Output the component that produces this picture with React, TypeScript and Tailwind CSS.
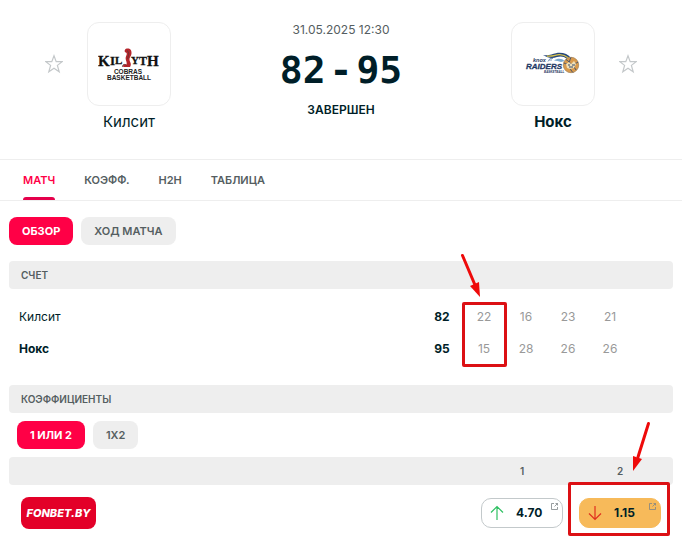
import { ReactNode, useState } from "react";
import clsx from "clsx";

const tabs = ["МАТЧ", "КОЭФФ.", "H2H", "ТАБЛИЦА"];

const rows = [
  { team: "Килсит", total: 82, quarters: [22, 16, 23, 21], winner: false },
  { team: "Нокс", total: 95, quarters: [15, 28, 26, 26], winner: true }
];

function StarButton({ label }: { label: string }) {
  return (
    <button type="button" aria-label={label} className="mt-8 self-start">
      <svg width="18" height="20" viewBox="0 0 18 20" fill="none" stroke="#c4c8ca" strokeWidth="1.2">
        <path d="M9 1.800 11.200 7.600H17.200L12.400 11.400 14.200 17.800 9 14.200 3.800 17.800 5.600 11.400.8 7.600H6.800Z" />
      </svg>
    </button>
  );
}

function KilsythLogo() {
  return (
    <svg width="62" height="40" viewBox="0 0 62 40" role="img" aria-label="Kilsyth Cobras">
      <g fontFamily="Liberation Serif, serif" fontWeight="700" fill="#111" stroke="#111" strokeWidth=".3">
        <text x="0" y="22" fontSize="15">K</text>
        <text x="12" y="21" fontSize="13">I</text>
        <text x="17" y="20" fontSize="11">L</text>
        <text x="33" y="20" fontSize="11">Y</text>
        <text x="41" y="21" fontSize="12">T</text>
        <text x="49" y="22" fontSize="15">H</text>
      </g>
      <path
        d="M27.500 5C31 3.500 34 5.500 33.500 9.500 33.500 12 31 13.500 31.500 16 32 18.500 34 20 32 23L25.500 23C24 21.500 26 19.500 28.500 20.500 29.500 18 27 16 27.800 13 28.500 11 29.500 9.500 28 8.500 26.500 8.500 26 6.500 27.500 5Z"
        fill="#b5252b"
      />
      <path
        d="M29 6.500C32 8.500 30 12 29.800 15M24.500 23C24 20.500 26.500 19.500 28.500 21.500"
        stroke="#5a3434"
        strokeWidth=".8"
        fill="none"
      />
      <g fontFamily="Liberation Sans, sans-serif" fontWeight="700" fill="#222" textAnchor="middle">
        <text x="30" y="30" fontSize="6.500">COBRAS</text>
        <text x="31" y="36" fontSize="6.500">BASKETBALL</text>
      </g>
    </svg>
  );
}

function RaidersLogo() {
  return (
    <svg width="56" height="28" viewBox="0 0 56 28" role="img" aria-label="Knox Raiders">
      <path d="M18 5C24 6 27 4 31 3.200 37 2 43 4 46 8L42 9C39 6 35 6 32 7 27 9 23 8 18 5Z" fill="#27477c" />
      <path d="M22 6C27 7 30 5 34 4.600 38 4.300 41 6 43.500 8" stroke="#d9c34a" strokeWidth="1.300" fill="none" />
      <path d="M29 10.500C32 8 37 8 39.500 11L36 12C34 11 31 11 29 10.500Z" fill="#7ba9cf" />
      <g fontFamily="Liberation Sans, sans-serif" fontWeight="700" fontStyle="italic" fill="#1f3864">
        <text x="8" y="12" fontSize="5.500">knox</text>
        <text x="1" y="19" fontSize="8" stroke="#1f3864" strokeWidth=".3">RAIDERS</text>
        <text x="19" y="23" fontSize="3">BASKETBALL</text>
      </g>
      <path d="M23 11.500 25 8.500H28M24 10H27" stroke="#6f8fb5" strokeWidth=".9" fill="none" />
      <circle cx="46" cy="15" r="7.700" fill="#d99a4c" stroke="#a8865a" strokeWidth=".8" />
      <path
        d="M39 13C43 15 49 15 53 12M46 7.500C43 13 44 19 48 22.500M41 9.500C45 12 50 18 51 20"
        stroke="#32486e"
        strokeWidth=".9"
        fill="none"
      />
      <path d="M41 14 44 12 46 14 49 11 51 14 49 18 45 19 42 18Z" fill="#f0dfb5" />
      <path d="M43 15H45M47 15H50M44 17H48" stroke="#32486e" strokeWidth="1" />
    </svg>
  );
}

function Team({ name, winner, children }: { name: string; winner?: boolean; children: ReactNode }) {
  return (
    <div className="flex w-[84px] flex-col items-center">
      <div className="flex size-[84px] items-center justify-center rounded-xl border border-[#eeeeee]">{children}</div>
      <a href="#" className={clsx("mt-1 text-[15px] leading-6", winner && "font-bold")}>
        {name}
      </a>
    </div>
  );
}

function Pill({ active, onClick, children }: { active: boolean; onClick: () => void; children: ReactNode }) {
  return (
    <button
      type="button"
      onClick={onClick}
      className={clsx(
        "h-7 rounded-lg px-[13px] text-[11px]",
        active ? "bg-[#ff0046] font-bold text-white" : "bg-[#eeeeee] font-semibold text-[#555e61]"
      )}
    >
      {children}
    </button>
  );
}

function SectionTitle({ children }: { children: ReactNode }) {
  return (
    <h2 className="flex h-7 items-center rounded bg-[#eeeeee] px-3 text-[10px] font-semibold text-[#555e61]">
      {children}
    </h2>
  );
}

function OddsButton({ value, up }: { value: string; up?: boolean }) {
  return (
    <button
      type="button"
      className={clsx(
        "relative flex h-[30px] w-[82px] items-center gap-3 rounded-[10px] border pl-2 text-[12px] font-bold",
        up ? "border-[#c3c9cb] bg-white" : "border-[#f7ba5a] bg-[#f7ba5a]"
      )}
    >
      <svg
        width="14"
        height="16"
        viewBox="0 0 14 16"
        fill="none"
        stroke={up ? "#2fc163" : "#e0301e"}
        strokeWidth="1.2"
      >
        <path d={up ? "M7 15V1.500M1 7.500 7 1.500 13 7.500" : "M7 1V14.500M1 8.500 7 14.500 13 8.500"} />
      </svg>
      {value}
      <svg
        className="absolute top-1 right-1"
        width="7"
        height="7"
        viewBox="0 0 7 7"
        fill="none"
        stroke="#7d8486"
        strokeWidth=".8"
      >
        <path d="M3 .5H.5V6.500H6.500V4M4.500 .5H6.500V2.500M6.500 .5 3.500 3.500" />
      </svg>
    </button>
  );
}

export default function App() {
  const [tab, setTab] = useState("МАТЧ");
  const [view, setView] = useState("ОБЗОР");
  const [market, setMarket] = useState("1 ИЛИ 2");

  return (
    <main className="min-h-screen bg-white pb-3 font-['Inter',sans-serif] text-[#001e28]">
      <header className="flex items-start justify-between px-[45px] pt-[22px] pb-[25px]">
        <div className="flex gap-6">
          <StarButton label="Килсит" />
          <Team name="Килсит">
            <KilsythLogo />
          </Team>
        </div>
        <div className="flex flex-col items-center text-[12px] leading-4">
          <time className="text-[#555e61]">31.05.2025 12:30</time>
          <div className="my-2 flex gap-1 font-['DejaVu_Sans_Mono',monospace] text-[38px] leading-[48px] font-bold">
            <span>82</span>
            <span>-</span>
            <span>95</span>
          </div>
          <span className="font-semibold">ЗАВЕРШЕН</span>
        </div>
        <div className="flex gap-6">
          <Team name="Нокс" winner>
            <RaidersLogo />
          </Team>
          <StarButton label="Нокс" />
        </div>
      </header>

      <nav className="flex h-[42px] gap-[29px] border-y border-[#eeeeee] px-[23px]">
        {tabs.map((item) => (
          <button
            key={item}
            type="button"
            onClick={() => setTab(item)}
            className={clsx(
              "relative text-[11px] font-semibold",
              tab === item ? "text-[#ff0046]" : "text-[#555e61]"
            )}
          >
            {item}
            {tab === item ? <span className="absolute inset-x-0 bottom-0 h-[3px] rounded-t bg-[#e5004b]" /> : null}
          </button>
        ))}
      </nav>

      <div className="px-[9px] pt-4">
        <div className="mb-4 flex gap-2">
          {["ОБЗОР", "ХОД МАТЧА"].map((item) => (
            <Pill key={item} active={view === item} onClick={() => setView(item)}>
              {item}
            </Pill>
          ))}
        </div>

        <section className="relative mb-5">
          <SectionTitle>СЧЕТ</SectionTitle>
          <table className="mt-3 w-full table-fixed text-center text-[12px]">
            <tbody>
              {rows.map((row) => (
                <tr key={row.team} className="h-8">
                  <th
                    scope="row"
                    className={clsx("pl-2.5 text-left", row.winner ? "font-bold" : "font-normal")}
                  >
                    {row.team}
                  </th>
                  <td className="w-[42px] font-bold">{row.total}</td>
                  {row.quarters.map((points, index) => (
                    <td key={index} className="w-[42px] text-[#999999]">
                      {points}
                    </td>
                  ))}
                  <td className="w-[42px]" />
                </tr>
              ))}
            </tbody>
          </table>
          <div className="absolute top-[41px] right-[166px] h-[65px] w-[45px] rounded-xs border-3 border-[#dc1014]" />
          <svg className="absolute -top-2 right-[190px]" width="24" height="46" viewBox="0 0 24 46">
            <path d="M3.500 2.500 16 32" stroke="#ee0a0a" strokeWidth="3" strokeLinecap="round" />
            <path d="M11 33 20 29 21 44Z" fill="#ee0a0a" />
          </svg>
        </section>

        <section>
          <SectionTitle>КОЭФФИЦИЕНТЫ</SectionTitle>
          <div className="my-2 flex gap-2 px-2">
            {["1 ИЛИ 2", "1X2"].map((item) => (
              <Pill key={item} active={market === item} onClick={() => setMarket(item)}>
                {item}
              </Pill>
            ))}
          </div>
          <div className="relative">
            <div className="flex h-7 items-center justify-end gap-4 rounded bg-[#eeeeee] px-3 text-center text-[10px] font-semibold text-[#555e61]">
              <span className="w-[82px]">1</span>
              <span className="w-[82px]">2</span>
            </div>
            <div className="mt-3 flex items-center gap-4 px-3">
              <a
                href="#"
                className="mr-auto flex h-8 w-[75px] items-center justify-center rounded-lg bg-[#e30028] text-[11px] font-extrabold text-white italic"
              >
                FONBET.BY
              </a>
              <OddsButton value="4.70" up />
              <OddsButton value="1.15" />
            </div>
            <div className="absolute top-[25px] right-[3px] h-[54px] w-[102px] rounded-xs border-3 border-[#dc1014]" />
            <svg className="absolute -top-9 right-[20px]" width="24" height="52" viewBox="0 0 24 52">
              <path d="M19.500 2.500 9 36" stroke="#ee0a0a" strokeWidth="3" strokeLinecap="round" />
              <path d="M4 35 13 38 4 50Z" fill="#ee0a0a" />
            </svg>
          </div>
        </section>
      </div>
    </main>
  );
}
